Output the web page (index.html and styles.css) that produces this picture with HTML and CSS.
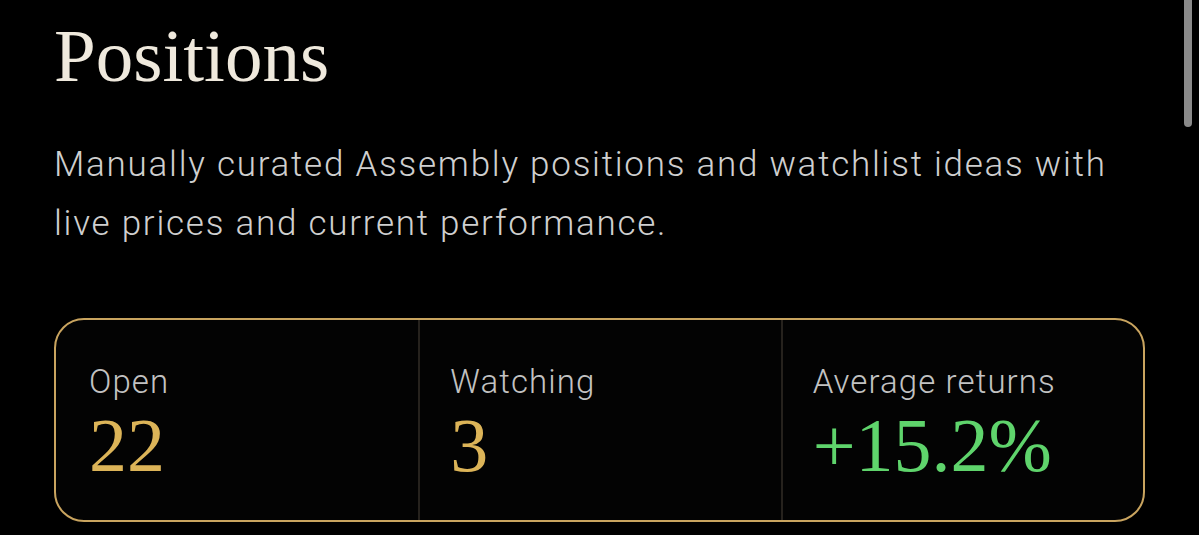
FILE: index.html
```html
<!DOCTYPE html>
<html lang="en">
<head>
<meta charset="utf-8">
<title>Positions</title>
<link rel="stylesheet" href="styles.css">
</head>
<body>
<main class="page">
  <h1 class="title">Positions</h1>
  <p class="lead">Manually curated Assembly positions and watchlist ideas with live prices and current performance.</p>
  <section class="stats">
    <div class="stat">
      <div class="stat-label">Open</div>
      <div class="stat-value gold">22</div>
    </div>
    <div class="stat">
      <div class="stat-label">Watching</div>
      <div class="stat-value gold">3</div>
    </div>
    <div class="stat">
      <div class="stat-label">Average returns</div>
      <div class="stat-value green">+15.2%</div>
    </div>
  </section>
</main>
<div class="scrollbar"></div>
</body>
</html>
```
FILE: styles.css
```css
html, body {
  margin: 0;
  padding: 0;
  background: #000;
  height: 100%;
  overflow: hidden;
}

.page {
  padding: 18px 54px 0 54px;
}

.title {
  margin: 0;
  font-family: "Liberation Serif", "Times New Roman", serif;
  font-weight: 400;
  font-size: 75px;
  line-height: 75px;
  color: #efe9dd;
}

.lead {
  margin: 42px 0 0 0;
  font-family: Roboto, "Liberation Sans", sans-serif;
  font-weight: 300;
  font-size: 35px;
  letter-spacing: 1.75px;
  line-height: 59px;
  color: #cfcfcf;
  max-width: 1080px;
}

.stats {
  margin-top: 65px;
  display: grid;
  grid-template-columns: repeat(3, 1fr);
  border: 2px solid #c9a45f;
  border-radius: 30px;
  background: #030303;
  height: 200px;
  box-sizing: content-box;
}

.stat {
  padding: 44px 30px 0 30px;
  border-left: 2px solid #26221d;
}

.stat:first-child {
  border-left: none;
  padding-left: 33px;
}

.stat-label {
  font-family: Roboto, "Liberation Sans", sans-serif;
  font-weight: 300;
  font-size: 33px;
  letter-spacing: 1.1px;
  line-height: 36px;
  color: #c2c2c2;
}

.stat-value {
  margin-top: 7px;
  font-family: "Liberation Serif", "Times New Roman", serif;
  font-size: 76px;
  line-height: 76px;
}

.gold {
  color: #dcb458;
}

.green {
  color: #5fd46c;
}

.scrollbar {
  position: absolute;
  top: 0;
  right: 7px;
  width: 8px;
  height: 127px;
  border-radius: 0 0 4px 4px;
  background: #8a8a8a;
}
```
